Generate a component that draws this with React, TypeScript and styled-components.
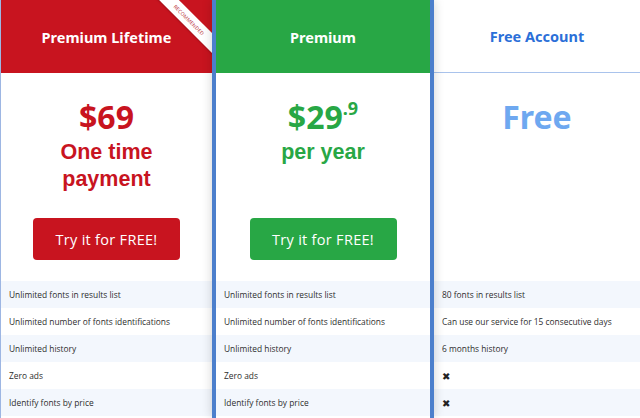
import React from 'react';
import styled, { createGlobalStyle } from 'styled-components';

const GlobalStyle = createGlobalStyle`
  html, body {
    margin: 0;
    padding: 0;
    background: #ffffff;
    font-family: 'Open Sans', 'Liberation Sans', sans-serif;
  }
`;

const Table = styled.div`
  display: grid;
  grid-template-columns: 212px 222px 1fr;
  width: 640px;
  height: 418px;
  overflow: hidden;
`;

const Column = styled.div<{ featured?: boolean; edge?: boolean }>`
  display: flex;
  flex-direction: column;
  position: relative;
  background: #ffffff;
  border-left: ${({ edge }) => (edge ? '1px solid #9db6e3' : 'none')};
  ${({ featured }) =>
    featured &&
    `
    border-left: 4px solid #4c7fcc;
    border-right: 4px solid #4c7fcc;
    box-shadow: 0 0 10px rgba(0, 0, 0, 0.18);
    z-index: 2;
  `}
`;

const Header = styled.div<{ bg: string; color: string; line?: boolean }>`
  position: relative;
  height: 73px;
  display: flex;
  align-items: center;
  justify-content: center;
  background: ${({ bg }) => bg};
  color: ${({ color }) => color};
  border-bottom: ${({ line }) => (line ? '1px solid #a9c3ec' : 'none')};
  box-sizing: border-box;
  overflow: hidden;
  font-family: 'Noto Sans', 'Open Sans', sans-serif;
  font-weight: 700;
  font-size: 14.5px;
`;

const Ribbon = styled.div`
  position: absolute;
  top: 13px;
  right: -27px;
  width: 100px;
  height: 14px;
  background: #ffffff;
  color: #b8323a;
  font-size: 5px;
  font-weight: 400;
  letter-spacing: 0.2px;
  display: flex;
  align-items: center;
  justify-content: center;
  transform: rotate(45deg);
  box-shadow: 0 1px 2px rgba(0, 0, 0, 0.2);
`;

const PriceBox = styled.div`
  height: 208px;
  display: flex;
  flex-direction: column;
  align-items: center;
  padding-top: 22px;
  box-sizing: border-box;
`;

const Amount = styled.div<{ color: string }>`
  font-family: 'Noto Sans', 'Open Sans', sans-serif;
  font-size: 32px;
  font-weight: 700;
  line-height: 44px;
  color: ${({ color }) => color};
  display: flex;
  align-items: flex-start;
`;

const Sup = styled.span`
  font-size: 18px;
  line-height: 26px;
`;

const Period = styled.div<{ color: string }>`
  font-family: 'Liberation Sans', Arial, sans-serif;
  font-size: 21.5px;
  font-weight: 700;
  line-height: 27px;
  color: ${({ color }) => color};
  text-align: center;
`;

const Button = styled.button<{ bg: string }>`
  margin-top: auto;
  margin-bottom: 21px;
  width: 147px;
  height: 42px;
  border: none;
  border-radius: 4px;
  background: ${({ bg }) => bg};
  color: #ffffff;
  font-family: 'Open Sans', sans-serif;
  font-size: 14.5px;
  letter-spacing: 0.3px;
  cursor: pointer;
`;

const Features = styled.div`
  display: flex;
  flex-direction: column;
`;

const Row = styled.div`
  height: 27px;
  display: flex;
  align-items: center;
  padding-left: 8px;
  font-size: 8.4px;
  color: #2d2d2d;
  &:nth-child(odd) {
    background: #f3f7fd;
  }
`;

const Cross = styled.span`
  font-size: 10px;
  color: #222;
`;

type Plan = {
  title: string;
  headerBg: string;
  headerColor: string;
  headerLine?: boolean;
  ribbon?: boolean;
  featured?: boolean;
  edge?: boolean;
  accent: string;
  amount: string;
  sup?: string;
  period?: string[];
  button?: string;
  features: (string | null)[];
};

const premiumFeatures = [
  'Unlimited fonts in results list',
  'Unlimited number of fonts identifications',
  'Unlimited history',
  'Zero ads',
  'Identify fonts by price',
];

const plans: Plan[] = [
  {
    title: 'Premium Lifetime',
    headerBg: '#c8141f',
    headerColor: '#ffffff',
    ribbon: true,
    edge: true,
    accent: '#c8141f',
    amount: '$69',
    period: ['One time', 'payment'],
    button: '#c8141f',
    features: premiumFeatures,
  },
  {
    title: 'Premium',
    headerBg: '#28a745',
    headerColor: '#ffffff',
    featured: true,
    accent: '#28a745',
    amount: '$29',
    sup: '.9',
    period: ['per year'],
    button: '#28a745',
    features: premiumFeatures,
  },
  {
    title: 'Free Account',
    headerBg: '#ffffff',
    headerColor: '#2b6fd8',
    headerLine: true,
    accent: '#6ea8f0',
    amount: 'Free',
    features: [
      '80 fonts in results list',
      'Can use our service for 15 consecutive days',
      '6 months history',
      null,
      null,
    ],
  },
];

const PlanColumn = ({ plan }: { plan: Plan }) => (
  <Column featured={plan.featured} edge={plan.edge}>
    <Header bg={plan.headerBg} color={plan.headerColor} line={plan.headerLine}>
      {plan.title}
      {plan.ribbon && <Ribbon>RECOMMENDED</Ribbon>}
    </Header>
    <PriceBox>
      <Amount color={plan.accent}>
        {plan.amount}
        {plan.sup && <Sup>{plan.sup}</Sup>}
      </Amount>
      {plan.period && (
        <Period color={plan.accent}>
          {plan.period.map((line, i) => (
            <React.Fragment key={line}>
              {i > 0 && <br />}
              {line}
            </React.Fragment>
          ))}
        </Period>
      )}
      {plan.button && <Button bg={plan.button}>Try it for FREE!</Button>}
    </PriceBox>
    <Features>
      {plan.features.map((f, i) => (
        <Row key={i}>{f ?? <Cross>✖</Cross>}</Row>
      ))}
    </Features>
  </Column>
);

export default function App() {
  return (
    <>
      <GlobalStyle />
      <Table>
        {plans.map((p) => (
          <PlanColumn key={p.title} plan={p} />
        ))}
      </Table>
    </>
  );
}
